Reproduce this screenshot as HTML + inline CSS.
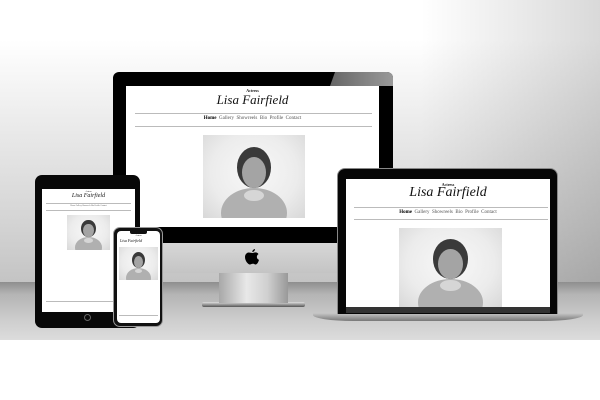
<!DOCTYPE html>
<html><head><style>
*{margin:0;padding:0;box-sizing:border-box}
body{width:600px;height:400px;overflow:hidden;position:relative;background:#fff;font-family:"Liberation Serif",serif}
.a{position:absolute}
.bg{left:0;top:0;width:600px;height:282px;background:linear-gradient(180deg,#fff 0,#fff 40px,#ececec 120px,#d2d2d2 230px,#c4c4c4 282px)}
.bgr{left:0;top:0;width:600px;height:282px;background:linear-gradient(90deg,rgba(0,0,0,0) 70%,rgba(0,0,0,.15) 100%)}
.floor{left:0;top:282px;width:600px;height:58px;background:linear-gradient(180deg,#8e8e8e 0,#b4b4b4 12px,#cfcfcf 40px,#dcdcdc 58px)}
.scr{background:#fff;overflow:hidden}
.photo{position:absolute;overflow:hidden;background:radial-gradient(ellipse at 50% 45%,#f8f8f8 0,#ececec 60%,#d8d8d8 100%)}
.photo i{position:absolute;border-radius:50%;display:block}
.hair{left:33%;top:14%;width:34%;height:50%;background:#3a3a3a}
.face{left:38%;top:26%;width:24%;height:38%;background:#a4a4a4}
.body{left:18%;top:64%;width:64%;height:60%;background:#b0b0b0}
.neck{left:40%;top:66%;width:20%;height:14%;background:#d6d6d6}
.t{position:absolute;left:0;width:100%;text-align:center;color:#111;white-space:nowrap}
.ln{position:absolute;height:1px;background:#bbb}
</style></head><body>
<div class="a bg"></div><div class="a bgr"></div><div class="a floor"></div>

<!-- iMac -->
<div class="a" style="left:202px;top:302px;width:103px;height:5px;background:linear-gradient(#e0e0e0,#555);border-radius:2px"></div>
<div class="a" style="left:219px;top:272px;width:69px;height:31px;background:linear-gradient(90deg,#a8a8a8,#e8e8e8 40%,#d0d0d0 70%,#999)"></div>
<div class="a" style="left:113px;top:242px;width:280px;height:31px;background:linear-gradient(#d8d8d8,#c4c4c4);border-radius:0 0 6px 6px"></div>
<svg class="a" style="left:245px;top:249px" width="15" height="17" viewBox="0 0 15 17"><path d="M10 0c0 1.5-1.2 3-2.7 3C7.2 1.5 8.5 0.2 10 0zM7.5 4c1 0 1.8-.6 3-.6 1.3 0 2.4.7 3 1.700-2.5 1.4-2 4.9.5 5.8-.5 1.5-1.6 4.5-3.2 4.6-1.2 0-1.5-.7-2.9-.7-1.5 0-1.9.7-3 .7C3.2 15.6 0 12 0 8 0 5.5 1.7 3.5 3.8 3.5 5 3.5 6.5 4 7.5 4z" fill="#000"/></svg>
<div class="a" style="left:113px;top:72px;width:280px;height:171px;background:#000;border-radius:6px 6px 0 0"></div>
<div class="a" style="left:330px;top:72px;width:63px;height:14px;background:linear-gradient(90deg,#666,#999);clip-path:polygon(8% 0,100% 0,100% 100%,0 100%);border-radius:0 6px 0 0"></div>
<div class="a scr" style="left:126px;top:86px;width:253px;height:141px">
 <div class="t" style="top:2px;font-size:4px;font-weight:bold">Actress</div>
 <div class="t" style="top:6px;font-size:13px;font-style:italic">Lisa Fairfield</div>
 <div class="ln" style="left:9px;width:237px;top:27px"></div>
 <div class="t" style="top:30px;font-size:5px;color:#555"><b style="color:#000">Home</b>&nbsp; Gallery&nbsp; Showreels&nbsp; Bio&nbsp; Profile&nbsp; Contact</div>
 <div class="ln" style="left:9px;width:237px;top:40px"></div>
 <div class="photo" style="left:77px;top:49px;width:102px;height:83px"><i class="hair"></i><i class="body"></i><i class="neck"></i><i class="face"></i></div>
</div>

<!-- iPad -->
<div class="a" style="left:35px;top:175px;width:105px;height:153px;background:#080808;border-radius:7px"></div>
<div class="a" style="left:84px;top:314px;width:7px;height:7px;border:1px solid #666;border-radius:50%"></div>
<div class="a scr" style="left:42px;top:189px;width:93px;height:123px">
 <div class="t" style="top:2px;font-size:2px">Actress</div>
 <div class="t" style="top:4px;font-size:6px;font-style:italic">Lisa Fairfield</div>
 <div class="ln" style="left:4px;width:85px;top:14px"></div>
 <div class="t" style="top:16px;font-size:2px;color:#555">Home Gallery Showreels Bio Profile Contact</div>
 <div class="ln" style="left:4px;width:85px;top:21px"></div>
 <div class="photo" style="left:25px;top:26px;width:43px;height:35px"><i class="hair"></i><i class="body"></i><i class="neck"></i><i class="face"></i></div>
 <div class="ln" style="left:4px;width:85px;top:112px"></div>
</div>

<!-- Phone -->
<div class="a" style="left:113px;top:227px;width:50px;height:100px;background:#111;border:1px solid #999;border-radius:7px"></div>
<div class="a scr" style="left:117px;top:231px;width:43px;height:92px;border-radius:4px">
 <div class="a" style="left:13px;top:0;width:17px;height:3px;background:#111;border-radius:0 0 2px 2px"></div>
 <div class="t" style="top:4px;font-size:2px">Actress</div>
 <div class="t" style="top:7px;font-size:4px;font-style:italic;text-align:left;left:3px">Lisa Fairfield</div>
 <div class="photo" style="left:2px;top:16px;width:39px;height:33px"><i class="hair"></i><i class="body"></i><i class="neck"></i><i class="face"></i></div>
 <div class="ln" style="left:2px;width:39px;top:84px"></div>
</div>

<!-- Laptop -->
<div class="a" style="left:313px;top:313px;width:270px;height:8px;background:linear-gradient(#c8c8c8,#777);border-radius:0 0 40px 40px/0 0 6px 6px"></div>
<div class="a" style="left:337px;top:168px;width:221px;height:146px;background:#060606;border-radius:8px 8px 0 0;border:1px solid #888;border-bottom:none"></div>
<div class="a" style="left:346px;top:307px;width:204px;height:6px;background:#333"></div>
<div class="a scr" style="left:346px;top:179px;width:204px;height:128px">
 <div class="t" style="top:3px;font-size:4px;font-weight:bold">Actress</div>
 <div class="t" style="top:6px;font-size:14px;font-style:italic">Lisa Fairfield</div>
 <div class="ln" style="left:8px;width:194px;top:28px;height:1px"></div>
 <div class="t" style="top:31px;font-size:5px;color:#555"><b style="color:#000">Home</b>&nbsp; Gallery&nbsp; Showreels&nbsp; Bio&nbsp; Profile&nbsp; Contact</div>
 <div class="ln" style="left:8px;width:194px;top:40px"></div>
 <div class="photo" style="left:53px;top:49px;width:103px;height:79px"><i class="hair"></i><i class="body"></i><i class="neck"></i><i class="face"></i></div>
</div>
</body></html>
